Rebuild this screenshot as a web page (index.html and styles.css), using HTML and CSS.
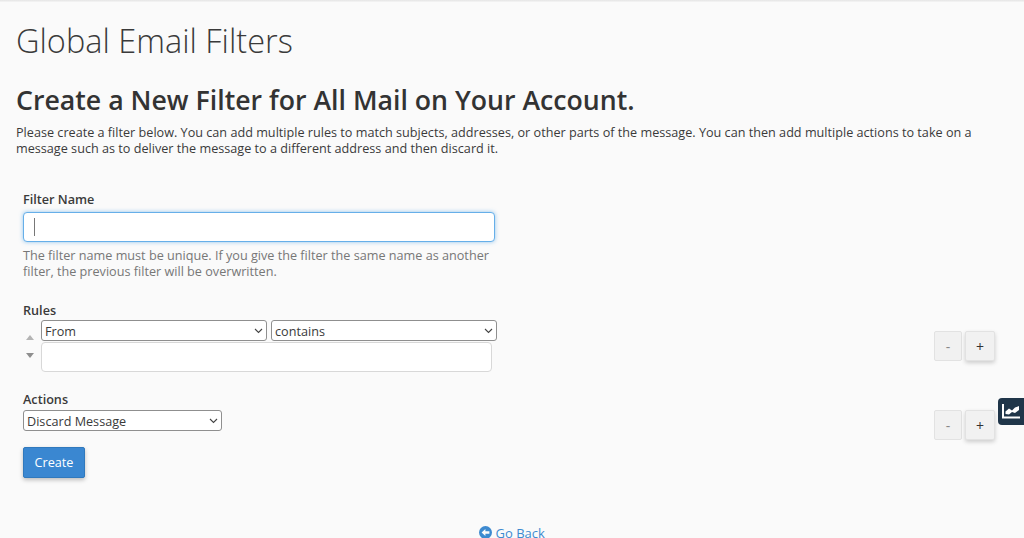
FILE: index.html
```html
<!DOCTYPE html>
<html lang="en">
<head>
  <meta charset="UTF-8" />
  <title>Global Email Filters</title>
  <link rel="stylesheet" href="styles.css">
</head>
<body>
  <div class="top-line"></div>

  <main class="page">
    <h1>Global Email Filters</h1>
    <h2>Create a New Filter for All Mail on Your Account.</h2>
    <p class="intro">Please create a filter below. You can add multiple rules to match subjects, addresses, or other parts of the message. You can then add multiple actions to take on a message such as to deliver the message to a different address and then discard it.</p>

    <form class="filter-form">
      <!-- FILTER NAME -->
      <div class="field-name">
        <label class="field-label" for="filtername">Filter Name</label>
        <div class="name-input">
          <span class="caret"></span>
          <input id="filtername" type="text" />
        </div>
        <p class="help">The filter name must be unique. If you give the filter the same name as another filter, the previous filter will be overwritten.</p>
      </div>

      <!-- RULES -->
      <div class="field-label rules-label">Rules</div>
      <div class="row rule-row">
        <div class="rule">
          <div class="sorter">
            <svg width="8" height="5" viewBox="0 0 8 5"><path d="M4 0 8 5H0z" fill="#b4b4b4"/></svg>
            <svg width="8" height="5" viewBox="0 0 8 5"><path d="M0 0H8L4 5z" fill="#8e8e8e"/></svg>
          </div>
          <div class="rule-fields">
            <div class="rule-selects">
              <div class="select-wrap w-part">
                <select><option>From</option></select>
                <svg class="chevron" width="9" height="6" viewBox="0 0 9 6"><path d="M1 1l3.500 3.500L8 1" fill="none" stroke="#444" stroke-width="1.100"/></svg>
              </div>
              <div class="select-wrap w-match">
                <select><option>contains</option></select>
                <svg class="chevron" width="9" height="6" viewBox="0 0 9 6"><path d="M1 1l3.500 3.500L8 1" fill="none" stroke="#444" stroke-width="1.100"/></svg>
              </div>
            </div>
            <input class="rule-value" type="text" />
          </div>
        </div>
        <div class="add-remove">
          <button type="button" class="btn-minus">-</button>
          <button type="button" class="btn-plus">+</button>
        </div>
      </div>

      <!-- ACTIONS -->
      <div class="field-label actions-label">Actions</div>
      <div class="row action-row">
        <div class="select-wrap w-action">
          <select><option>Discard Message</option></select>
          <svg class="chevron" width="9" height="6" viewBox="0 0 9 6"><path d="M1 1l3.500 3.500L8 1" fill="none" stroke="#444" stroke-width="1.100"/></svg>
        </div>
        <div class="add-remove">
          <button type="button" class="btn-minus">-</button>
          <button type="button" class="btn-plus">+</button>
        </div>
      </div>

      <button type="button" class="btn-create">Create</button>
    </form>

    <div class="back">
      <a href="#">
        <svg width="13" height="13" viewBox="0 0 13 13"><circle cx="6.500" cy="6.500" r="6.500" fill="#3d8ad0"/><path d="M2.600 6.500 6.400 3v2.200h4v2.600h-4V10z" fill="#fafafa"/></svg>
        Go Back
      </a>
    </div>
  </main>

  <!-- STATS TAB -->
  <div class="stats-tab">
    <svg width="18" height="15" viewBox="0 0 18 15"><path d="M1 0v13.500h17" fill="none" stroke="#fff" stroke-width="2"/><path d="M3.500 10V7.500L7 4.500l3 2 3-3 4-1.500v4l-4 3-3-1-3 2.500z" fill="#fff"/></svg>
  </div>
</body>
</html>
```

FILE: styles.css
```css
/* BASE */
html, body { margin: 0; height: 538px; overflow: hidden; }
body {
  background: #fafafa;
  color: #3a3a3a;
  font-family: 'Open Sans', sans-serif;
  font-size: 12.65px;
  line-height: 16px;
}
.top-line {
  height: 2px;
  background: linear-gradient(#e4e4e4, #f5f5f5);
}
.page { padding: 0 16px; }

/* HEADINGS */
h1 {
  margin: 19px 0 0;
  font-size: 32.5px;
  line-height: 40px;
  font-weight: 300;
  color: #3a3a3a;
}
h2 {
  margin: 21px 0 0;
  font-size: 26.7px;
  line-height: 36px;
  font-weight: 600;
  color: #333;
}
.intro { margin: 6px 0 0; }

/* FORM */
.filter-form { margin-top: 35px; padding: 0 13px 0 7px; }
.field-label { font-weight: 600; font-size: 12.65px; line-height: 17px; }
.field-name { width: 472px; }
.name-input { position: relative; margin-top: 4px; }
.name-input input {
  display: block;
  box-sizing: border-box;
  width: 472px;
  height: 30px;
  background: #fff;
  border: 1px solid #66afe9;
  border-radius: 4px;
  box-shadow: 0 0 4px rgba(102, 175, 233, 0.7);
  outline: none;
}
.caret {
  position: absolute;
  left: 11px; top: 6px;
  width: 1px; height: 18px;
  background: #777;
}
.help { margin: 5px 0 0; color: #777; }

.rules-label { margin-top: 23px; }
.actions-label { margin-top: 19px; }

.row { display: flex; justify-content: space-between; }
.rule-row { align-items: center; margin-top: 1px; }
.action-row { align-items: flex-start; margin-top: 2px; }

.rule { display: flex; align-items: center; }
.sorter {
  width: 18px;
  display: flex;
  flex-direction: column;
  gap: 13px;
  padding-left: 3px;
  box-sizing: border-box;
}
.sorter svg { display: block; }
.rule-selects { display: flex; gap: 4px; }
.rule-value {
  display: block;
  box-sizing: border-box;
  width: 451px;
  height: 30px;
  margin-top: 1px;
  background: #fff;
  border: 1px solid #d8d8d8;
  border-radius: 4px;
}

/* SELECTS */
.select-wrap { position: relative; }
.select-wrap select {
  display: block;
  width: 100%;
  height: 21px;
  box-sizing: border-box;
  padding: 0 0 0 3px;
  appearance: none;
  -webkit-appearance: none;
  background: #fff;
  border: 1px solid #8f8f8f;
  border-radius: 3px;
  color: #3a3a3a;
  font-family: 'Open Sans', sans-serif;
  font-size: 12.65px;
}
.chevron {
  position: absolute;
  right: 4px; top: 8px;
  pointer-events: none;
}
.w-part { width: 226px; }
.w-match { width: 226px; }
.w-action { width: 199px; }

/* ADD / REMOVE BUTTONS */
.add-remove { display: flex; gap: 3px; }
.add-remove button {
  height: 30px;
  box-sizing: border-box;
  background: #f1f1f1;
  border: 1px solid #e2e2e2;
  border-radius: 2px;
  padding: 0;
  font-family: 'Open Sans', sans-serif;
  font-size: 14px;
}
.btn-minus { width: 28px; color: #888; }
.btn-plus {
  width: 30px;
  color: #333;
  box-shadow: 0 2px 4px rgba(0, 0, 0, 0.18);
}

.btn-create {
  display: block;
  margin-top: 7px;
  width: 62px;
  height: 31px;
  padding: 0 0 2px;
  background: #3a87d1;
  border: 1px solid #3079bd;
  border-radius: 2px;
  box-shadow: 0 2px 4px rgba(0, 0, 0, 0.25);
  color: #fff;
  font-family: 'Open Sans', sans-serif;
  font-size: 12.65px;
}

/* GO BACK */
.back { margin-top: 46px; text-align: center; font-size: 13px; line-height: 19px; }
.back a { color: #3d8ad0; text-decoration: none; }
.back svg { vertical-align: -1px; }

/* STATS TAB (floats over the page edge) */
.stats-tab {
  position: absolute;
  right: 0; top: 398px;
  width: 26px; height: 27px;
  background: #1f3549;
  border-radius: 4px 0 0 4px;
  display: flex;
  align-items: center;
  justify-content: center;
}
```
